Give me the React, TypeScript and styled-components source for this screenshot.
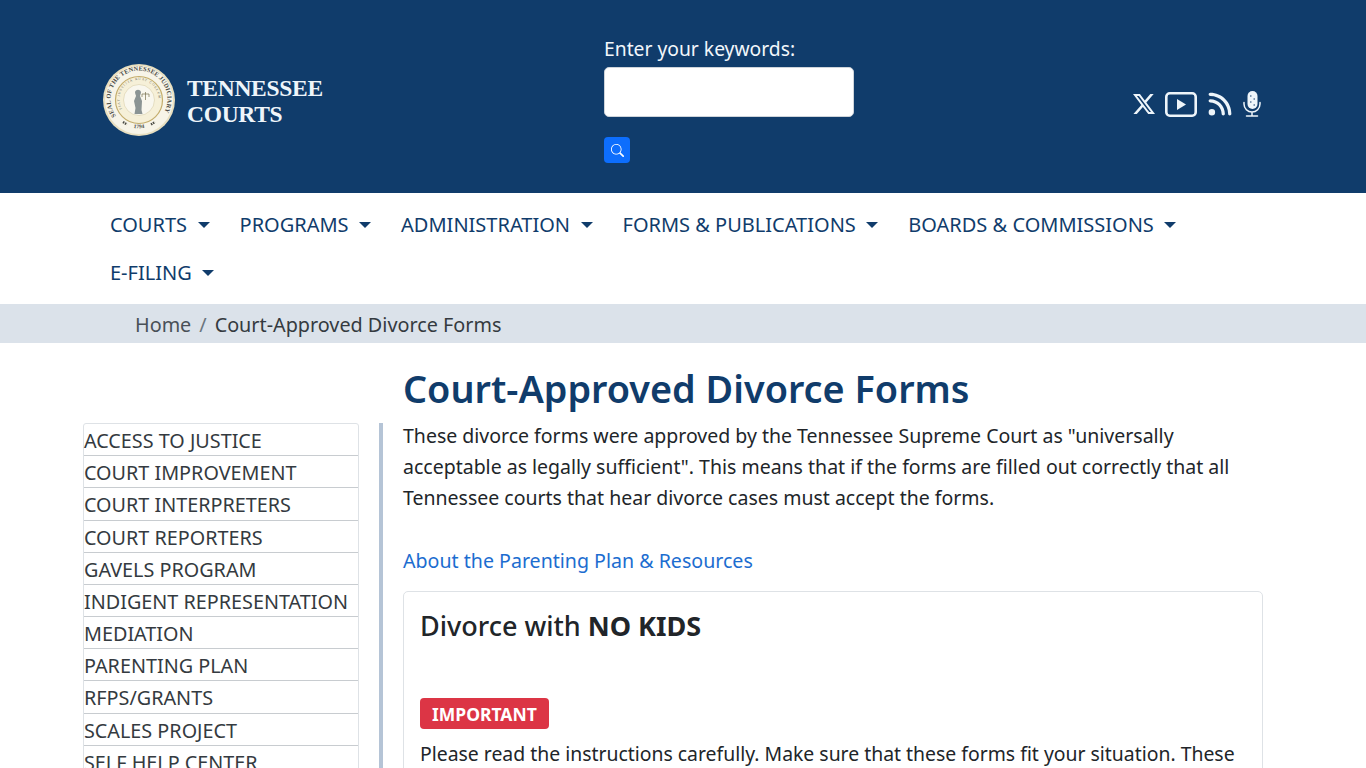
import * as React from "react";
import styled, { createGlobalStyle } from "styled-components";
import { BsSearch, BsTwitterX } from "react-icons/bs";
import { FaRss } from "react-icons/fa6";

const navItems = ["COURTS", "PROGRAMS", "ADMINISTRATION", "FORMS & PUBLICATIONS", "BOARDS & COMMISSIONS", "E-FILING"];
const sideItems = [
  "ACCESS TO JUSTICE",
  "COURT IMPROVEMENT",
  "COURT INTERPRETERS",
  "COURT REPORTERS",
  "GAVELS PROGRAM",
  "INDIGENT REPRESENTATION",
  "MEDIATION",
  "PARENTING PLAN",
  "RFPS/GRANTS",
  "SCALES PROJECT",
  "SELF HELP CENTER",
];

const Seal = () => (
  <svg width="72" height="72" viewBox="0 0 72 72">
    <defs>
      <path id="sealTop" d="M13 52a28.500 28.500 0 1 1 46 0" />
      <path id="sealBottom" d="M18 59a33 33 0 0 0 36 0" />
      <path id="sealInner" d="M19 45a19.500 19.500 0 1 1 34 0" />
    </defs>
    <circle cx="36" cy="36" r="36" fill="#e8dfc0" />
    <circle cx="36" cy="36" r="34" fill="#f7f4e8" />
    <circle cx="36" cy="36" r="23.500" fill="#f6f0d8" stroke="#c4ad6c" strokeWidth="1.200" />
    <circle cx="36" cy="36" r="15.500" fill="#f9f7ee" stroke="#d8cfa8" strokeWidth="0.600" />
    <SealText fontSize="6.300" fontWeight="700" fill="#4a4a44">
      <textPath href="#sealTop" textLength="120">
        SEAL OF THE TENNESSEE JUDICIARY
      </textPath>
    </SealText>
    <SealText fontSize="5.500" fontWeight="700" fill="#4a4a44" textAnchor="middle">
      <textPath href="#sealBottom" startOffset="50%">
        1794
      </textPath>
    </SealText>
    <SealText fontSize="3.400" fill="#6b6b5e">
      <textPath href="#sealInner" textLength="70">
        FIAT JUSTITIA RUAT COELUM
      </textPath>
    </SealText>
    <path d="M32 28c1-3 5-3 6 0 0 2-1 3-1 4l2 5-.5 9 1 4h-8l1-6-1.500-7 2-5c0-1-1-2-1-4z" fill="#8b9494" />
    <path d="M39 30h7M42.500 28v8M39 30v3M46 30v3" stroke="#77704f" strokeWidth="0.700" fill="none" />
    <path d="M20 58l4 2.500M48 60.500l4-2.500" stroke="#4a4a44" strokeWidth="2.400" strokeDasharray="1.500 0.800" />
  </svg>
);

const PlayIcon = () => (
  <svg width="32" height="25" viewBox="0 0 32 25" fill="none">
    <rect x="1.300" y="1.300" width="29.400" height="22.400" rx="3.500" stroke="currentColor" strokeWidth="2.600" />
    <path d="M12 7v11l9-5.500z" fill="currentColor" />
  </svg>
);

const MicIcon = () => (
  <svg width="18" height="26" viewBox="0 0 18 26" fill="none" stroke="currentColor">
    <rect x="4.500" y="0" width="10" height="18" rx="5" fill="currentColor" stroke="none" />
    <path d="M1 11.500V13a8 8 0 0 0 16 0v-1.500M9 21v3.500M3.500 25h11" strokeWidth="1.500" strokeLinecap="round" />
    <path d="M7 5h1.500M10.500 8H12M7 11h1.500M10.500 14H12" stroke="#103c6b" strokeWidth="1.200" />
  </svg>
);

const App: React.FC = () => {
  return (
    <>
      <GlobalStyle />
      <Header>
        <Brand>
          <Seal />
          <BrandName>
            TENNESSEE
            <br />
            COURTS
          </BrandName>
        </Brand>
        <SearchForm>
          <SearchLabel htmlFor="keywords">Enter your keywords:</SearchLabel>
          <SearchInput id="keywords" type="text" />
          <SearchButton type="button" aria-label="Search">
            <BsSearch size={13} />
          </SearchButton>
        </SearchForm>
        <Social>
          <BsTwitterX size={22} />
          <PlayIcon />
          <FaRss size={26} />
          <MicIcon />
        </Social>
      </Header>

      <Nav>
        {navItems.map((item) => (
          <NavLink key={item}>
            {item}
            <Caret />
          </NavLink>
        ))}
      </Nav>

      <Breadcrumb>
        <Crumb>Home</Crumb>
        <CrumbSep>/</CrumbSep>
        <CrumbCurrent>Court-Approved Divorce Forms</CrumbCurrent>
      </Breadcrumb>

      <Page>
        <Sidebar>
          <SideList>
            {sideItems.map((item) => (
              <SideItem key={item}>{item}</SideItem>
            ))}
          </SideList>
        </Sidebar>
        <Main>
          <Title>Court-Approved Divorce Forms</Title>
          <Content>
            <Intro>
              These divorce forms were approved by the Tennessee Supreme Court as "universally acceptable as legally
              sufficient". This means that if the forms are filled out correctly that all Tennessee courts that hear
              divorce cases must accept the forms.
            </Intro>
            <PlanLink>About the Parenting Plan &amp; Resources</PlanLink>
            <Card>
              <CardTitle>
                Divorce with <b>NO KIDS</b>
              </CardTitle>
              <Badge>IMPORTANT</Badge>
              <CardText>
                Please read the instructions carefully. Make sure that these forms fit your situation. These forms are
                for divorces where there are no children.
              </CardText>
            </Card>
          </Content>
        </Main>
      </Page>
    </>
  );
};

export default App;

const GlobalStyle = createGlobalStyle`
  html, body {
    margin: 0;
    height: 768px;
    overflow: hidden;
    background: #fff;
  }
  body {
    font-family: "Noto Sans", "Open Sans", sans-serif;
    font-size: 19.5px;
    line-height: 1.5;
    color: #212529;
  }
  * {
    box-sizing: border-box;
  }
`;

const Header = styled.header`
  height: 193px;
  background: #103c6b;
  display: grid;
  grid-template-columns: 501px 528px 1fr;
  padding-left: 103px;
  color: #fff;
`;

const Brand = styled.div`
  display: flex;
  align-items: center;
  gap: 12px;
  height: 200px;
`;

const SealText = styled.text`
  font-family: "Liberation Serif", serif;
`;

const BrandName = styled.div`
  font-family: "Liberation Serif", serif;
  font-weight: 700;
  font-size: 23.5px;
  letter-spacing: -0.3px;
  line-height: 26px;
  color: #eef5fa;
  padding-top: 2px;
`;

const SearchForm = styled.form`
  display: flex;
  flex-direction: column;
  align-items: flex-start;
  padding-top: 34px;
`;

const SearchLabel = styled.label`
  font-size: 19.3px;
  line-height: 30px;
  margin-bottom: 3px;
  color: #f2f7fb;
`;

const SearchInput = styled.input`
  width: 250px;
  height: 50px;
  border: 1px solid #ced4da;
  border-radius: 5px;
  background: #fff;
  margin-bottom: 20px;
`;

const SearchButton = styled.button`
  width: 26px;
  height: 26px;
  border: none;
  border-radius: 4px;
  background: #0d6efd;
  color: #fff;
  padding: 0;
  display: flex;
  align-items: center;
  justify-content: center;
`;

const Social = styled.div`
  display: flex;
  align-items: center;
  gap: 10px;
  height: 208px;
  padding-left: 1px;
  color: #eef5fa;
`;

const Nav = styled.nav`
  height: 111px;
  padding: 8px 103px;
  display: flex;
  flex-wrap: wrap;
  align-content: flex-start;
`;

const NavLink = styled.a`
  display: flex;
  align-items: center;
  height: 48px;
  padding: 0 7px;
  margin-right: 16px;
  color: #103c6b;
  font-size: 20px;
`;

const Caret = styled.span`
  margin-left: 10.5px;
  border-top: 6px solid #103c6b;
  border-left: 6px solid transparent;
  border-right: 6px solid transparent;
`;

const Breadcrumb = styled.div`
  height: 39px;
  background: #dbe2ea;
  padding: 2px 0 0 135px;
  display: flex;
  align-items: center;
  font-size: 19.8px;
`;

const Crumb = styled.a`
  color: #495057;
`;

const CrumbSep = styled.span`
  color: #6c757d;
  padding: 0 8px;
`;

const CrumbCurrent = styled.span`
  color: #343a40;
`;

const Page = styled.div`
  display: grid;
  grid-template-columns: 276px 1fr;
  column-gap: 20px;
  padding: 0 103px 0 83px;
`;

const Sidebar = styled.aside`
  padding-top: 80px;
`;

const SideList = styled.ul`
  list-style: none;
  margin: 0;
  padding: 0;
  border: 1px solid #dee2e6;
  border-radius: 3px;
`;

const SideItem = styled.li`
  height: 32.18px;
  line-height: 33px;
  font-size: 19.8px;
  color: #343a40;
  white-space: nowrap;
  border-bottom: 1px solid #c8ccd0;
`;

const Main = styled.main`
  min-width: 0;
`;

const Title = styled.h1`
  margin: 0;
  height: 80px;
  padding-left: 24px;
  padding-top: 18px;
  font-size: 37.8px;
  font-weight: 600;
  line-height: 56px;
  color: #103c6b;
`;

const Content = styled.div`
  display: flow-root;
  border-left: 4px solid #b5c4d6;
  padding-left: 20px;
  height: 400px;
`;

const Intro = styled.p`
  margin: -3px 0 32px;
  line-height: 31px;
`;

const PlanLink = styled.a`
  display: block;
  color: #1c6dd0;
  font-size: 19.6px;
  line-height: 31px;
  margin-bottom: 15px;
`;

const Card = styled.section`
  border: 1px solid #dee2e6;
  border-radius: 5px;
  padding: 16px;
`;

const CardTitle = styled.h2`
  margin: 0 0 54px;
  font-size: 27px;
  font-weight: 500;
  line-height: 36px;

  b {
    font-weight: 700;
  }
`;

const Badge = styled.span`
  display: inline-block;
  background: #dc3545;
  color: #fff;
  font-weight: 700;
  font-size: 17.5px;
  line-height: 30px;
  padding: 1px 12px 0;
  border-radius: 4px;
`;

const CardText = styled.p`
  margin: 9px 0 0;
  font-size: 19.4px;
  line-height: 31px;
`;
